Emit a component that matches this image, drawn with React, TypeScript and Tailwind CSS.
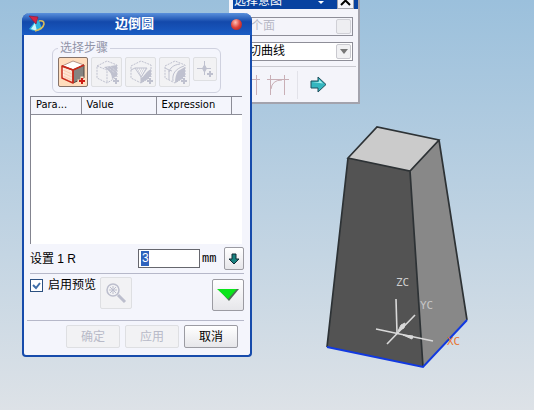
import type { ReactNode } from 'react';

type Step = {
  label: string;
  icon: ReactNode;
};

const COLUMNS = [
  { label: 'Para...', width: 'w-[50px]' },
  { label: 'Value', width: 'w-[75px]' },
  { label: 'Expression', width: 'w-[75px]' },
  { label: '', width: '' },
];

const DISABLED_BUTTON = 'border-[#dedfe2] bg-[#f2f2f4] text-[#b8bac8]';
const ENABLED_BUTTON = 'border-[#9b9ba2] bg-linear-to-b from-white to-[#e6e6ea] text-black';

function Cube({ children }: { children?: ReactNode }) {
  return (
    <svg viewBox="0 0 28 28" className="h-7 w-7" fill="none" stroke="#bfc1cf">
      <path d="M4 8 L14 3 L24 7 V19 L14 25 L4 20 Z" strokeDasharray="2 1" />
      {children}
      <path d="M20 23h6M23 20v6" strokeWidth="2" stroke="#f2f2f4" strokeLinecap="square" />
      <path d="M20 23h6M23 20v6" strokeWidth="2" />
    </svg>
  );
}

const STEPS: Step[] = [
  {
    label: 'Corner',
    icon: (
      <Cube>
        <path d="M4 8 L14 12 V25" strokeDasharray="2 1" />
        <path d="M11 9 L24 7 V18 L19 21 C19 15 16 13 11 9Z" fill="#bfc1cf" stroke="none" />
        <path d="M14 9 L22 15 M17 8 L24 14" stroke="#dfe0e8" strokeDasharray="1 1" />
      </Cube>
    ),
  },
  {
    label: 'Setback',
    icon: (
      <Cube>
        <path d="M14 20 C18 18 18 14 24 11 V19 L14 25Z" fill="#bfc1cf" stroke="none" />
        <path d="M4 12 L8 10 L14 19 V25 M8 10 L20 10 L14 19" />
        <path d="M10 11h9M11 13h7M12 15h5M13 17h3" strokeDasharray="1 1" />
      </Cube>
    ),
  },
  {
    label: 'Stop short',
    icon: (
      <Cube>
        <path d="M17 13 L24 9 V19 L14 25 C14 20 15 16 17 13Z" fill="#bfc1cf" stroke="none" />
        <path d="M4 10 L8 12 V22 M8 14 C9 10 12 7 19 6 M12 23 C11 16 14 11 23 8 M8 12 L11 13" />
      </Cube>
    ),
  },
];

function ActiveCube() {
  return (
    <svg viewBox="0 0 28 28" className="h-7 w-7" strokeLinejoin="round">
      <path d="M3 8 L14 3 L25 7 L14 12Z" fill="#fff" stroke="#b5968a" />
      <path d="M14 12 L25 7 V20 L14 25Z" fill="#858481" stroke="#4e4742" />
      <path d="M3 8 L14 12 V25 L3 20Z" fill="#fff3ea" stroke="#c72b1c" strokeWidth="1.5" />
      <path d="M6 10v11M8 11v11M10 12v11M12 13v10M4 12l9 4M4 15l9 4M4 18l9 4" stroke="#f6b58f" strokeWidth=".5" />
      <path d="M3 8 L14 12 L25 7 M14 12V25" fill="none" stroke="#c72b1c" strokeWidth="1.5" />
      <path d="M20 23h6M23 20v6" stroke="#ffe0c4" strokeWidth="3" strokeLinecap="square" />
      <path d="M20 23h6M23 20v6" stroke="#cf1d14" strokeWidth="2" />
    </svg>
  );
}

function AppLogo() {
  return (
    <svg viewBox="0 0 18 18" className="h-[18px] w-[18px]">
      <path d="M9 3 L12 8 L14 14 Q8 18 1 14 L6 8Z" fill="#2fb4dd" />
      <path d="M7 8 L9 16 L3 14Z" fill="#c9f6fa" />
      <path d="M7 16 Q15 14 16 9 Q16 5 11 6" fill="none" stroke="#d9bd5a" strokeWidth="1.6" />
      <path d="M1 1 L10 2 L8 9Z" fill="#d42444" stroke="#8d1b3e" strokeWidth=".7" />
    </svg>
  );
}

function Solid() {
  return (
    <svg viewBox="320 120 155 255" className="absolute left-[320px] top-[120px] h-[255px] w-[155px]">
      <path d="M377 127 L439 140 L410 171 L348 158Z" fill="#cbcbcb" />
      <path d="M348 158 L410 171 L423 367 L327 347Z" fill="#535353" />
      <path d="M439 140 L467 320 L423 367 L410 171Z" fill="#888888" />
      <path
        d="M348 158 L377 127 L439 140 L410 171Z L327 347 M439 140 L467 320 M410 171 L423 367"
        fill="none"
        stroke="#2d3235"
        strokeWidth="1.7"
      />
      <path d="M327 347 L423 367 L467 320" fill="none" stroke="#1139e0" strokeWidth="2" />
      <g stroke="#d9d9d9" strokeWidth="1.6" fill="#d9d9d9">
        <path d="M396 299 L397 333 M376 329 L433 341 M387 344 L415 315" />
        <path d="M403 335 L413 336 L412 339Z M398 331 L401 325 L405 323 L404 328Z" strokeWidth="1" />
      </g>
      <g fontFamily="'DejaVu Sans Mono', monospace" fontSize="11">
        <text x="396" y="286" fill="#cfcfcf">ZC</text>
        <text x="420" y="309" fill="#c6c6c6">YC</text>
        <text x="447" y="345" fill="#e87632">XC</text>
      </g>
    </svg>
  );
}

function SelectionPanel() {
  return (
    <section className="absolute left-[229px] top-0 w-[131px] border-r-2 border-b-2 border-[#a3a3ad] bg-[#f4f4fa] pl-1">
      <header className="flex h-[9px] items-end bg-[#0842a0] pl-px text-white">
        <h2 className="flex-1 pb-0.5 text-xs leading-3">选择意图</h2>
        <svg viewBox="0 0 8 8" className="mr-3 h-2 w-2" fill="#fff">
          <path d="M1 0h6L4 3Z" />
        </svg>
        <button type="button" aria-label="关闭" className="mr-1 h-[9px] w-[17px] border-x border-b border-[#a3a3ad] bg-[#f4f4fa]">
          <svg viewBox="0 0 15 8" className="h-2 w-[15px]" stroke="#000" strokeWidth="2">
            <path d="M3 -4 L12 5 M12 -4 L3 5" />
          </svg>
        </button>
      </header>
      <div className="mr-[5px] mt-2 flex flex-col gap-1.5">
        <div className="flex h-[19px] border border-[#8e8e98] bg-[#f4f4fa] p-px">
          <select aria-label="面规则" disabled className="min-w-0 flex-1 appearance-none pl-4 text-xs leading-[15px] text-[#b8b9c6] opacity-100">
            <option>个面</option>
          </select>
          <span className="w-[15px] rounded-xs border border-[#d0d0d6] bg-[#eeeef1]" />
        </div>
        <div className="flex h-[19px] border border-[#8e8e98] bg-white p-px">
          <select aria-label="曲线规则" className="min-w-0 flex-1 appearance-none pl-3.5 text-xs leading-[15px] text-black">
            <option>切曲线</option>
          </select>
          <span className="flex w-[15px] items-center justify-center rounded-xs border border-[#c9c9cf] bg-[#f1f1f3]">
            <svg viewBox="0 0 8 5" className="h-[5px] w-2" fill="#777">
              <path d="M0 0h8L4 5Z" />
            </svg>
          </span>
        </div>
      </div>
      <div className="mr-0.5 mt-[5px] flex h-9 items-center border-t border-[#c9c9d0] pl-3.5">
        <svg viewBox="0 0 18 24" className="h-6 w-[18px]" stroke="#c9afb6">
          <path d="M3 6.500h10M9.500 2v20" />
        </svg>
        <svg viewBox="0 0 24 24" className="h-6 w-6" fill="none" stroke="#c9afb6">
          <path d="M2 6.500h22M5.500 2v20M19.500 2v20M6 16Q7 7 17 7" />
        </svg>
        <span className="ml-2 h-7 w-px bg-[#e2e2e9]" />
        <button type="button" aria-label="应用选择" className="ml-3">
          <svg viewBox="0 0 17 17" className="h-[17px] w-[17px]">
            <path d="M1 5h7V1l8 7.500L8 16v-4H1Z" fill="#35b6bf" stroke="#1f4f5c" />
            <path d="M2 6h7V3.500l4 4Z" fill="#a5eeee" />
          </svg>
        </button>
      </div>
    </section>
  );
}

function StepPicker() {
  return (
    <fieldset className="ml-7 mr-[29px] h-[51px] rounded-md border border-[#cfd1df] pl-[5px]">
      <legend className="px-0.5 text-xs leading-3 text-[#9294a8]">选择步骤</legend>
      <div className="flex items-start gap-[3px] pt-[3px]">
        <button type="button" aria-label="Edge" className="flex h-[30px] w-[30px] items-center justify-center rounded-xs border border-[#867369] bg-[#ffddbd]">
          <ActiveCube />
        </button>
        {STEPS.map((step) => (
          <button
            key={step.label}
            type="button"
            disabled
            aria-label={step.label}
            className={`flex h-[30px] w-[31px] items-center justify-center rounded-xs border ${DISABLED_BUTTON}`}
          >
            {step.icon}
          </button>
        ))}
        <button type="button" disabled aria-label="Point" className={`flex h-6 w-6 items-center justify-center rounded-xs border ${DISABLED_BUTTON}`}>
          <svg viewBox="0 0 20 20" className="h-5 w-5" stroke="#bfc1cf" fill="#bfc1cf">
            <path d="M2 9.500h14M9.500 2v14M9.500 6l2 3.500-2 3.500-2-3.500Z" />
            <path d="M12 15h6M15 12v6" strokeWidth="2" />
          </svg>
        </button>
      </div>
    </fieldset>
  );
}

function EdgeBlendDialog() {
  return (
    <form className="absolute left-[22px] top-[13px] w-[230px] rounded-t-lg rounded-b-sm border-x-2 border-b-2 border-[#164bab] bg-[#f4f5fc]">
      <header className="-mx-0.5 flex h-[22px] items-center rounded-t-lg bg-linear-to-b from-[#5a90dc] via-[#1349ab] via-40% to-[#1a5cc4] px-1.5 text-white">
        <AppLogo />
        <h1 className="flex-1 pr-2 text-center text-[13px] font-bold leading-4">边倒圆</h1>
        <button
          type="button"
          aria-label="关闭"
          className="mr-1 h-[11px] w-[11px] rounded-full bg-radial-[at_40%_30%] from-[#ffc0b5] via-[#df4038] to-[#8b1c2b]"
        />
      </header>

      <div className="pt-[7px]">
        <StepPicker />

        <div className="ml-1.5 mr-2 mt-[3px] h-[148px] border-l border-t border-[#83848f] bg-white">
          <table className="w-full table-fixed border-collapse font-['DejaVu_Sans_Condensed','DejaVu_Sans',sans-serif] text-[11px] leading-4">
            <thead>
              <tr>
                {COLUMNS.map((column) => (
                  <th
                    key={column.label}
                    scope="col"
                    className={`h-[17px] border-b border-r border-[#8c8d97] bg-[#f4f5fc] p-0 pl-[5px] text-left font-normal whitespace-nowrap last:border-r-0 ${column.width}`}
                  >
                    {column.label}
                  </th>
                ))}
              </tr>
            </thead>
            <tbody />
          </table>
        </div>

        <div className="mx-1.5 flex h-[29px] items-center text-xs">
          <label htmlFor="radius" className="w-[108px]">
            设置 1 R
          </label>
          <div className="h-[19px] w-[62px] border border-[#66676e] bg-white p-px">
            <input
              id="radius"
              defaultValue="3"
              className="ml-px block h-[15px] w-2 bg-[#2e62bd] pl-px text-xs leading-[15px] text-white outline-none"
            />
          </div>
          <span className="ml-0.5 font-['Liberation_Mono',monospace]">mm</span>
          <button type="button" aria-label="半径选项" className={`ml-auto flex h-[23px] w-5 items-center justify-center rounded-xs border ${ENABLED_BUTTON}`}>
            <svg viewBox="0 0 12 12" className="h-3 w-3">
              <path d="M4 1h4v5h3L6 11 1 6h3Z" fill="#17817f" stroke="#102c34" />
            </svg>
          </button>
        </div>

        <div className="mx-1.5 flex h-[47px] items-start border-t border-[#b6b8c9] pt-[3px]">
          <label className="flex items-center gap-[5px] pt-0.5 text-xs leading-[13px]">
            <input
              type="checkbox"
              defaultChecked
              className="peer h-[13px] w-[13px] appearance-none border border-[#2c5080] bg-white"
            />
            <svg viewBox="0 0 9 9" className="-ml-4 mr-0.5 hidden h-[9px] w-[9px] peer-checked:block" fill="none" stroke="#3f6ea9" strokeWidth="2">
              <path d="M1 4 L4 7 L8 2" />
            </svg>
            启用预览
          </label>
          <button type="button" disabled aria-label="预览" className={`ml-1 flex h-8 w-8 items-center justify-center rounded-xs border ${DISABLED_BUTTON}`}>
            <svg viewBox="0 0 24 24" className="h-6 w-6" fill="none" stroke="#bcbecd">
              <circle cx="9" cy="9" r="6" strokeWidth="1.5" />
              <path d="M6 6l6 6M12 6l-6 6M9 5v8M5 9h8" />
              <path d="M14 14l7 7" strokeWidth="3" />
            </svg>
          </button>
          <button type="button" aria-label="展开" className={`ml-auto mt-0.5 flex h-8 w-8 items-center justify-center rounded-xs border ${ENABLED_BUTTON}`}>
            <svg viewBox="0 0 22 14" className="h-3.5 w-[22px]">
              <path d="M1 1h21l-10 12Z" fill="#526b58" />
              <path d="M0 1h20l-9 10Z" fill="#0be51b" />
            </svg>
          </button>
        </div>

        <div className="ml-[3px] mr-1.5 flex h-[35px] items-start justify-end gap-[5px] border-t border-[#b6b8c9] pr-1.5 pt-1 text-xs">
          <button type="button" disabled className={`h-[23px] w-[54px] rounded-xs border ${DISABLED_BUTTON}`}>
            确定
          </button>
          <button type="button" disabled className={`h-[23px] w-[54px] rounded-xs border ${DISABLED_BUTTON}`}>
            应用
          </button>
          <button type="button" className={`h-[23px] w-[54px] rounded-xs border ${ENABLED_BUTTON}`}>
            取消
          </button>
        </div>
      </div>
    </form>
  );
}

export default function App() {
  return (
    <main className="relative min-h-screen overflow-hidden bg-linear-to-b from-[#9bc0dc] to-[#dde2e7] font-['Liberation_Sans','Noto_Sans_CJK_SC',sans-serif] text-black">
      <Solid />
      <SelectionPanel />
      <EdgeBlendDialog />
    </main>
  );
}
